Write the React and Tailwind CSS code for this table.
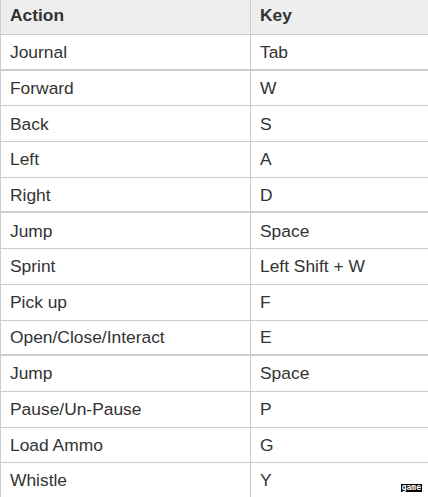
import React from 'react'

const groups = [
  [['Journal', 'Tab']],
  [
    ['Forward', 'W'],
    ['Back', 'S'],
    ['Left', 'A'],
    ['Right', 'D'],
  ],
  [
    ['Jump', 'Space'],
    ['Sprint', 'Left Shift + W'],
    ['Pick up', 'F'],
    ['Open/Close/Interact', 'E'],
  ],
  [
    ['Jump', 'Space'],
    ['Pause/Un-Pause', 'P'],
    ['Load Ammo', 'G'],
    ['Whistle', 'Y'],
  ],
]

export default function App() {
  return (
    <div className="relative h-[497px] w-[428px] overflow-hidden bg-white font-['Liberation_Sans',Arial,sans-serif] text-[17.4px] text-[#333]">
      <div className="border-l border-[#ccc]">
        {/* Header */}
        <div className="flex h-[35px] border-b border-[#ccc] bg-[#eee] font-bold">
          <div className="flex w-[250px] items-center border-r border-[#ccc] pb-[3px] pl-[9px]">Action</div>
          <div className="flex flex-1 items-center pb-[3px] pl-[9px]">Key</div>
        </div>

        {groups.map((rows, gi) => (
          <div key={gi}>
            {rows.map(([action, key], ri) => (
              <div
                key={ri}
                className={`flex h-[35.7px] border-[#ccc] ${ri < rows.length - 1 ? 'border-b' : 'border-b-2'}`}
              >
                <div className="flex w-[250px] items-center border-r border-[#ccc] pl-[9px]">{action}</div>
                <div className="flex flex-1 items-center pl-[9px]">{key}</div>
              </div>
            ))}
          </div>
        ))}
      </div>

      <span className="absolute bottom-[5px] right-[6px] bg-black px-[1px] text-[8px] leading-none font-bold text-white font-['DejaVu_Sans_Mono',monospace]">
        game
      </span>
    </div>
  )
}
